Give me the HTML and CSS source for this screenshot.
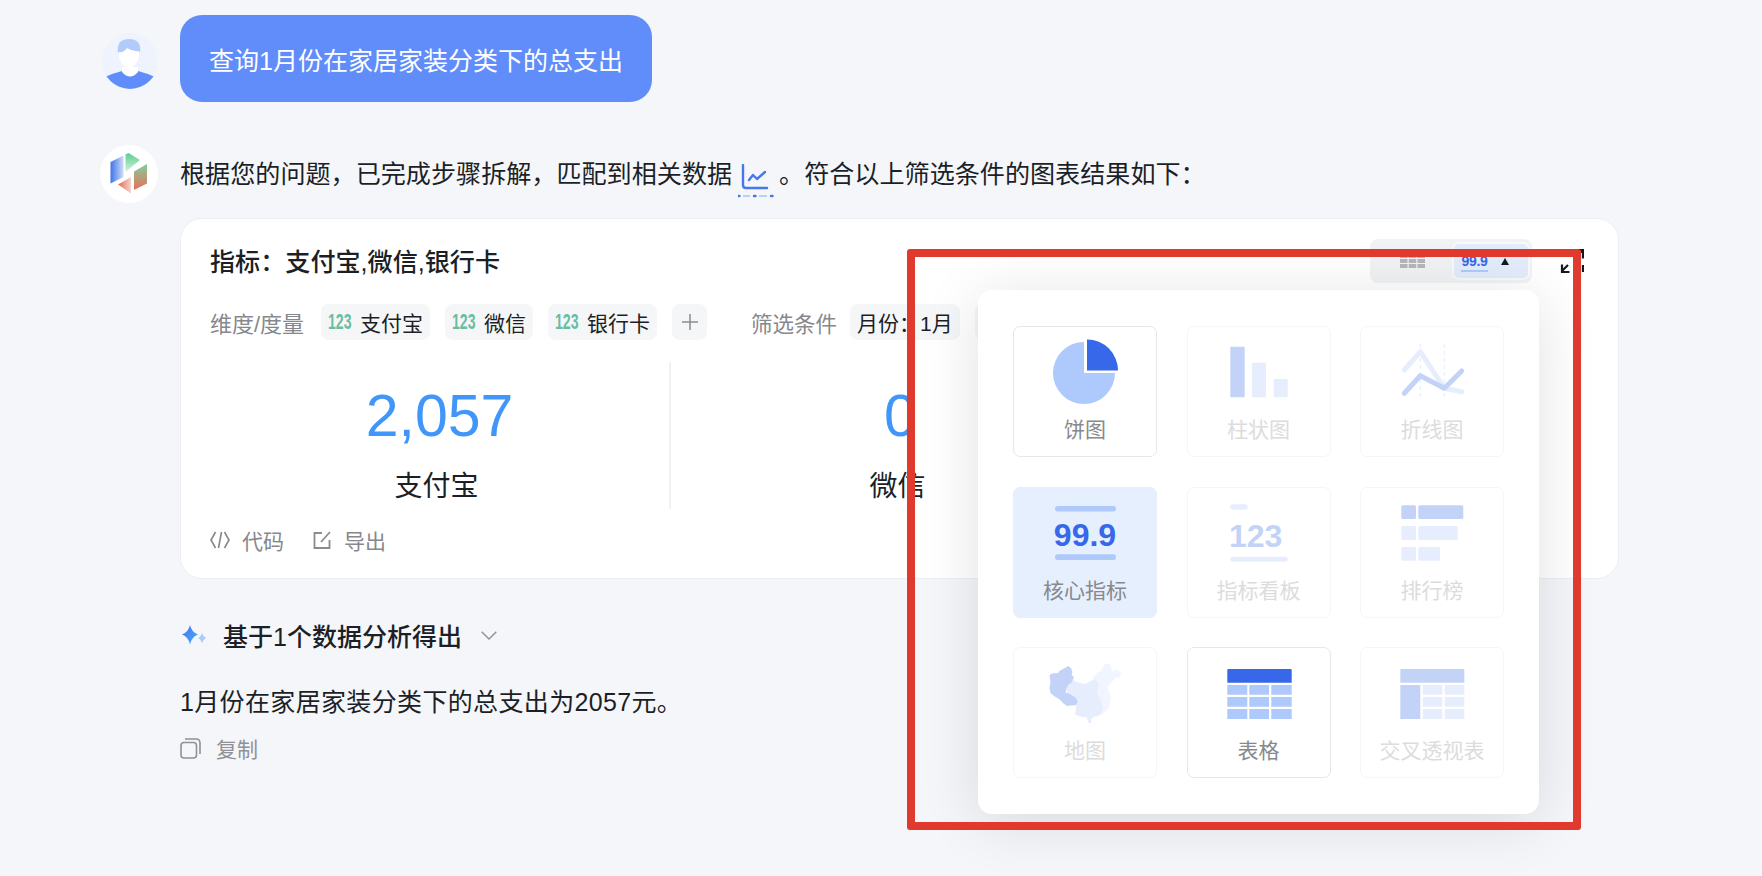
FILE: index.html
```html
<!DOCTYPE html>
<html lang="zh-CN">
<head>
    <meta charset="UTF-8">
    <title>数据问答</title>
    <link rel="stylesheet" href="styles.css">
</head>
<body>
    <div class="chat">
        <!-- 用户提问 -->
        <div class="msg msg-user">
            <svg class="avatar-user" viewBox="0 0 56 56">
                <defs><clipPath id="round"><circle cx="28" cy="28" r="28"/></clipPath></defs>
                <g clip-path="url(#round)">
                    <rect width="56" height="56" fill="#eef3fe"/>
                    <path d="M3 44 Q12 40 20 38 L36 38 Q44 40 53 44 L56 58 L0 58 Z" fill="#618dfa"/>
                    <path d="M20 34 L36 34 L36 39 Q28 48 20 39 Z" fill="#fff"/>
                    <path d="M16 20 Q14 6 27 6 Q40 6 38 20 Z" fill="#b1cbfb"/>
                    <path d="M16.5 19 Q22 20 25 15 Q31 19 37.5 18 Q37.5 32 27 35 Q16.5 32 16.5 19 Z" fill="#fff"/>
                </g>
            </svg>
            <div class="bubble">查询1月份在家居家装分类下的总支出</div>
        </div>

        <!-- 回答 -->
        <div class="msg msg-answer">
            <svg class="avatar-bot" viewBox="0 0 58 58">
                <defs>
                    <linearGradient id="logo-blue" x1="0" y1="0" x2="1" y2="0">
                        <stop offset="0" stop-color="#3f74ea"/><stop offset="1" stop-color="#cfdcf8"/>
                    </linearGradient>
                    <linearGradient id="logo-green" x1="0" y1="0" x2="0" y2="1">
                        <stop offset="0" stop-color="#57cf8e"/><stop offset="1" stop-color="#d6f1e0"/>
                    </linearGradient>
                    <linearGradient id="logo-side" x1="0" y1="0" x2="0" y2="1">
                        <stop offset="0" stop-color="#7fcf9a"/><stop offset="1" stop-color="#e8705a"/>
                    </linearGradient>
                    <linearGradient id="logo-red" x1="1" y1="0" x2="0" y2="0">
                        <stop offset="0" stop-color="#f3d5cc"/><stop offset="1" stop-color="#e8694f"/>
                    </linearGradient>
                </defs>
                <circle cx="29" cy="29" r="29" fill="#fff"/>
                <path d="M10.5 17 L23.5 10.5 L23.5 32 L10.5 38.5 Z" fill="url(#logo-blue)"/>
                <path d="M25.5 9.5 L28.5 8 L40 15 L25.5 27 Z" fill="url(#logo-green)"/>
                <path d="M47 19 L47 38.5 L34 45 L34 26.5 Z" fill="url(#logo-side)"/>
                <path d="M18 39.5 L31 32 L31 48.5 Z" fill="url(#logo-red)"/>
            </svg>
            <div class="answer">
                <p class="intro">
                    根据您的问题，已完成步骤拆解，匹配到相关数据
                    <span class="data-link">
                        <svg viewBox="0 0 36 36" width="36" height="36">
                            <path d="M5 1 V21 Q5 24 8 24 H29" fill="none" stroke="#4677ef" stroke-width="2.4" stroke-linecap="round"/>
                            <path d="M11 16 L15 11 L19 15 L27 8" fill="none" stroke="#4677ef" stroke-width="2.4" stroke-linecap="round" stroke-linejoin="round"/>
                            <path d="M0 32 H1.5 M16 32 H17.5 M33 32 H34.5" stroke="#4677ef" stroke-width="2.4" stroke-linecap="round"/>
                            <path d="M5 32 H12 M21 32 H29" stroke="#a8c1f7" stroke-width="1.4"/>
                        </svg>
                    </span>
                    。符合以上筛选条件的图表结果如下：
                </p>

                <div class="card">
                    <div class="card-head">
                        <h2 class="card-title">指标：支付宝,微信,银行卡</h2>
                        <div class="card-tools">
                            <div class="segment">
                                <div class="segment-item">
                                    <svg viewBox="0 0 25 14" width="25" height="14">
                                        <path d="M0 0H7.5V4H0ZM8.7 0H16.3V4H8.7ZM17.5 0H25V4H17.5ZM0 5H7.5V9H0ZM8.7 5H16.3V9H8.7ZM17.5 5H25V9H17.5ZM0 10H7.5V14H0ZM8.7 10H16.3V14H8.7ZM17.5 10H25V14H17.5Z" fill="#b5b6b8"/>
                                    </svg>
                                </div>
                                <div class="segment-item is-active">
                                    <span class="segment-num">99.9</span>
                                    <svg viewBox="0 0 8 7" width="8" height="7"><path d="M4 0 L8 7 H0 Z" fill="#15181e"/></svg>
                                </div>
                            </div>
                            <svg class="expand" viewBox="0 0 24 24" width="24" height="24">
                                <path d="M8 16 L2 22 M2 15.5 V23 H9.5" fill="none" stroke="#15181e" stroke-width="2.2"/>
                                <path d="M16 8 L22 2 M14.5 1 H23 V9.5" fill="none" stroke="#15181e" stroke-width="2.2"/>
                                <path d="M23 16 V23" stroke="#15181e" stroke-width="2.2"/>
                            </svg>
                        </div>
                    </div>

                    <div class="fields">
                        <span class="field-label">维度/度量</span>
                        <span class="chip"><i class="num-tag">123</i>支付宝</span>
                        <span class="chip"><i class="num-tag">123</i>微信</span>
                        <span class="chip"><i class="num-tag">123</i>银行卡</span>
                        <span class="chip chip-add">
                            <svg viewBox="0 0 18 18" width="18" height="18"><path d="M9 1V17M1 9H17" stroke="#8a8c91" stroke-width="1.5"/></svg>
                        </span>
                        <span class="field-label field-label-filter">筛选条件</span>
                        <span class="chip">月份：1月</span>
                        <span class="chip chip-blank"></span>
                    </div>

                    <div class="metrics">
                        <div class="metric">
                            <div class="metric-value">2,057</div>
                            <div class="metric-name">支付宝</div>
                        </div>
                        <div class="metric">
                            <div class="metric-value">0</div>
                            <div class="metric-name">微信</div>
                        </div>
                    </div>

                    <div class="card-foot">
                        <span class="foot-action">
                            <svg viewBox="0 0 20 20" width="20" height="20"><path d="M5.5 2 L1 10 L5.5 18 M14.5 2 L19 10 L14.5 18 M11.5 2 L8.5 18" fill="none" stroke="#8a8c91" stroke-width="1.7"/></svg>
                            代码
                        </span>
                        <span class="foot-action">
                            <svg viewBox="0 0 20 20" width="20" height="20"><path d="M10 3 H2.5 V18 H17.5 V10 M18 2 L9 12" fill="none" stroke="#8a8c91" stroke-width="1.8"/></svg>
                            导出
                        </span>
                    </div>
                </div>

                <div class="basis">
                    <svg viewBox="0 0 24 20" width="24" height="20">
                        <defs>
                            <linearGradient id="spark" x1="0" y1="0" x2="1" y2="1">
                                <stop offset="0" stop-color="#3f6ff0"/><stop offset="1" stop-color="#4fb0fa"/>
                            </linearGradient>
                        </defs>
                        <path d="M8 0 Q9.5 7 16 9.5 Q9.5 12 8 19.5 Q6.5 12 0 9.5 Q6.5 7 8 0 Z" fill="url(#spark)"/>
                        <path d="M20 8 Q20.8 11 24 13 Q20.8 15 20 18 Q19.2 15 16.5 13 Q19.2 11 20 8 Z" fill="#a9ccfb"/>
                    </svg>
                    <span class="basis-text">基于1个数据分析得出</span>
                    <svg viewBox="0 0 16 9" width="16" height="9"><path d="M0.7 0.7 L8 8 L15.3 0.7" fill="none" stroke="#8f9196" stroke-width="1.4"/></svg>
                </div>

                <p class="result">1月份在家居家装分类下的总支出为2057元。</p>

                <div class="copy">
                    <svg viewBox="0 0 21 21" width="21" height="21">
                        <rect x="1" y="4.5" width="15.5" height="15.5" rx="3" fill="none" stroke="#8f9196" stroke-width="1.6"/>
                        <path d="M5 1 H16 Q20 1 20 5 V16" fill="none" stroke="#8f9196" stroke-width="1.6"/>
                    </svg>
                    复制
                </div>
            </div>
        </div>
    </div>

    <!-- 图表类型面板 -->
    <div class="chart-menu">
        <div class="tile is-on">
            <svg class="tile-icon" viewBox="0 0 72 72">
                <path class="c-mid" d="M35 5 A31 31 0 1 0 66 36 L35 36 Z"/>
                <path class="c-dark" d="M38 2.5 A31 31 0 0 1 69 33.5 L38 33.5 Z"/>
            </svg>
            <span>饼图</span>
        </div>
        <div class="tile">
            <svg class="tile-icon" viewBox="0 0 72 72">
                <rect class="c-soft" x="7.3" y="9.7" width="14.4" height="50.6" rx="1"/>
                <rect class="c-pale" x="29" y="25.7" width="14" height="34.6" rx="1"/>
                <rect class="c-pale" x="50.7" y="42" width="14" height="18.3" rx="1"/>
            </svg>
            <span>柱状图</span>
        </div>
        <div class="tile">
            <svg class="tile-icon" viewBox="0 0 72 72">
                <path d="M24.3 7V62M48.3 7V62" fill="none" stroke="#e6eefe" stroke-width="1.2" stroke-dasharray="4 3"/>
                <path d="M8.3 33 L24.3 14.7 L48.3 51.3 L65.7 54.7" fill="none" stroke="#e6eefe" stroke-width="5" stroke-linecap="round" stroke-linejoin="round"/>
                <path d="M8.3 56.3 L24.3 38.7 L48.3 51.3 L65.7 34" fill="none" stroke="#c3d3f8" stroke-width="5" stroke-linecap="round" stroke-linejoin="round"/>
            </svg>
            <span>折线图</span>
        </div>

        <div class="tile is-current">
            <svg class="tile-icon" viewBox="0 0 72 72">
                <rect class="c-mid" x="6" y="8" width="61" height="5.4" rx="2.7"/>
                <text class="tile-num c-dark" x="36" y="48" text-anchor="middle">99.9</text>
                <rect class="c-mid" x="6" y="56.3" width="61" height="5.7" rx="2.8"/>
            </svg>
            <span>核心指标</span>
        </div>
        <div class="tile">
            <svg class="tile-icon" viewBox="0 0 72 72">
                <rect class="c-pale" x="7.3" y="6.3" width="17.4" height="5.4" rx="2.7"/>
                <text class="tile-num c-soft" x="6" y="49">123</text>
                <rect class="c-pale" x="7.3" y="58.7" width="57.4" height="5" rx="2.5"/>
            </svg>
            <span>指标看板</span>
        </div>
        <div class="tile">
            <svg class="tile-icon" viewBox="0 0 72 72">
                <rect class="c-soft" x="5.3" y="7.3" width="14.7" height="13.7" rx="1.5"/>
                <rect class="c-soft" x="22.3" y="7.3" width="45" height="13.7" rx="1.5"/>
                <rect class="c-pale" x="5.3" y="28" width="14.7" height="14" rx="1.5"/>
                <rect class="c-pale" x="22.3" y="28" width="39.4" height="14" rx="1.5"/>
                <rect class="c-pale" x="5.3" y="49" width="14.7" height="13.7" rx="1.5"/>
                <rect class="c-pale" x="22.3" y="49" width="21.7" height="13.7" rx="1.5"/>
            </svg>
            <span>排行榜</span>
        </div>

        <div class="tile">
            <svg class="tile-icon" viewBox="0 0 72 72">
                <path class="c-faint" d="M48 15 L52 13 L56 6 L60 5.5 L62 8 L62.7 12.7 L68 12 L72 14 L71 19 L66 20 L63 24 L58 29 L62 40 L60 50 L52 57 L48 52 L44 40 L46 28 L44 20 Z"/>
                <path class="c-pale" d="M18 28 L22 21 L28 24 L36 26 L42 23 L47 21 L50 26 L48 34 L52 42 L54 50 L51 57 L45 59 L42.5 60.5 L42 65 L39.5 65 L38 59.5 L33 59 L29 57.5 L26 57 L27 50 L28 42 L24 38 L18 35 Z"/>
                <path class="c-soft" d="M0.5 17 L3 15.5 L9 15 L11 12.5 L16 10 L19 8 L22 10 L23.5 14 L22.5 17 L25 19 L23 24 L19 27 L17.5 31 L16.5 34.5 L22 36.5 L27 40 L28.5 43 L27.5 47 L22 47.5 L18 48 L14 45 L10 41 L5 38 L1.5 35 L0.5 30 L1.5 24 Z"/>
            </svg>
            <span>地图</span>
        </div>
        <div class="tile is-on">
            <svg class="tile-icon" viewBox="0 0 72 72">
                <path class="c-dark" d="M5.3 11 H67.7 Q68.7 11 68.7 12 V24.7 H4.3 V12 Q4.3 11 5.3 11 Z"/>
                <path class="c-mid" d="M4.3 27H24.3V36.7H4.3ZM26.3 27H46V36.7H26.3ZM48.3 27H68.7V36.7H48.3ZM4.3 39H24.3V48.7H4.3ZM26.3 39H46V48.7H26.3ZM48.3 39H68.7V48.7H48.3ZM4.3 51H24.3V61H4.3ZM26.3 51H46V61H26.3ZM48.3 51H68.7V61H48.3Z"/>
            </svg>
            <span>表格</span>
        </div>
        <div class="tile">
            <svg class="tile-icon" viewBox="0 0 72 72">
                <path class="c-soft" d="M5.3 11 H67.3 Q68.3 11 68.3 12 V24.7 H4.3 V12 Q4.3 11 5.3 11 Z"/>
                <rect class="c-soft" x="4.3" y="27" width="20" height="34"/>
                <path class="c-pale" d="M26.7 27H46.3V36.7H26.7ZM48.7 27H68.3V36.7H48.7ZM26.7 39H46.3V48.7H26.7ZM48.7 39H68.3V48.7H48.7ZM26.7 51H46.3V61H26.7ZM48.7 51H68.3V61H48.7Z"/>
            </svg>
            <span>交叉透视表</span>
        </div>
    </div>

    <!-- 标注框 -->
    <div class="mark-box"></div>
</body>
</html>
```

FILE: styles.css
```css
* {
    box-sizing: border-box;
}
html, body {
    height: 100%;
}
body {
    margin: 0;
    overflow: hidden;
    background: #f5f6f9;
    color: #1c1f26;
    font-family: "Liberation Sans", "Noto Sans CJK SC", sans-serif;
    font-size: 25px;
}
p, h2 {
    margin: 0;
    font-weight: 400;
}
.chat {
    padding: 15px 0 0 100px;
    width: 1619px;
}
.msg {
    display: flex;
    gap: 22px;
}
.avatar-user {
    width: 56px;
    height: 56px;
    margin: 18px 0 0 2px;
    flex: none;
}
.avatar-bot {
    width: 58px;
    height: 58px;
    flex: none;
}
.bubble {
    height: 87px;
    padding: 0 29px;
    display: flex;
    align-items: center;
    background: #618dfa;
    color: #fff;
    border-radius: 22px;
}
.msg-answer {
    margin-top: 43px;
}
.answer {
    flex: 1;
    min-width: 0;
}
.intro {
    height: 58px;
    line-height: 58px;
    font-size: 25.1px;
    white-space: nowrap;
    display: flex;
    gap: 5px;
}
.data-link {
    display: inline-flex;
    align-items: center;
    width: 36px;
    height: 58px;
    margin: 8px 0 0 1px;
}

/* card */
.card {
    margin-top: 15px;
    background: #fff;
    border: 1px solid #eceef2;
    border-radius: 22px;
    padding: 20px 34px 23px 29px;
}
.card-head {
    display: flex;
    justify-content: space-between;
    align-items: center;
}
.card-title {
    font-size: 25.1px;
    font-weight: 500;
    padding-bottom: 2px;
}
.card-tools {
    display: flex;
    align-items: center;
    gap: 28px;
}
.segment {
    width: 162px;
    height: 44px;
    padding: 3px 2px;
    display: flex;
    justify-content: flex-end;
    background: #f1f2f4;
    border-radius: 8px;
}
.segment-item {
    width: 80px;
    display: flex;
    align-items: center;
    justify-content: center;
}
.segment-item.is-active {
    width: 78px;
    gap: 13px;
    padding-right: 12px;
    background: #e3ecfb;
    border: 2px solid #f8f9fb;
    border-radius: 7px;
}
.segment-num {
    margin-top: 3px;
    font-size: 14px;
    line-height: 14px;
    font-weight: 700;
    letter-spacing: -0.3px;
    color: #3768ea;
    padding-bottom: 2px;
    border-bottom: 2px solid #aec9fb;
}
.fields {
    margin-top: 21px;
    display: flex;
    align-items: center;
    gap: 15px;
    font-size: 21px;
}
.field-label {
    min-width: 96px;
    color: #86888d;
    font-size: 22px;
}
.field-label-filter {
    min-width: 0;
    margin-left: 29px;
    margin-right: -2px;
    font-size: 21.5px;
}
.chip {
    height: 36px;
    padding: 0 7px;
    display: inline-flex;
    align-items: center;
    flex: none;
    background: #f5f6f8;
    border-radius: 8px;
}
.chip-add {
    width: 35px;
    justify-content: center;
}
.chip-blank {
    width: 60px;
}
.num-tag {
    width: 24px;
    margin-right: 8px;
    font-style: normal;
    font-size: 22px;
    font-weight: 700;
    color: #69bda1;
    transform: scaleX(0.64);
    transform-origin: left center;
}
.metrics {
    margin-top: 22px;
    height: 147px;
    display: flex;
}
.metric {
    width: 461px;
    padding-top: 19px;
    text-align: center;
    border-right: 2px solid #f0f1f4;
}
.metric-value {
    height: 70px;
    line-height: 70px;
    font-size: 59px;
    color: #4096f9;
}
.metric-name {
    margin-top: 16px;
    height: 40px;
    line-height: 40px;
    font-size: 28px;
    margin-right: 6px;
}
.card-foot {
    margin-top: 16px;
    height: 30px;
    display: flex;
    gap: 28px;
    font-size: 21px;
    color: #86888d;
}
.foot-action {
    display: flex;
    align-items: center;
    gap: 12px;
}

/* below the card */
.basis {
    margin: 39px 0 0 2px;
    height: 34px;
    display: flex;
    align-items: center;
    gap: 17px;
}
.basis-text {
    font-size: 25px;
    font-weight: 500;
    margin-right: 2px;
}
.result {
    margin-top: 33px;
    line-height: 34px;
    letter-spacing: 0.35px;
}
.copy {
    margin-top: 14px;
    height: 30px;
    display: flex;
    align-items: center;
    gap: 15px;
    font-size: 21px;
    color: #8f9196;
}

/* chart type panel */
.chart-menu {
    position: absolute;
    left: 978px;
    top: 290px;
    width: 561px;
    height: 524px;
    padding: 36px 35px;
    display: grid;
    grid-template-columns: repeat(3, 144px);
    grid-auto-rows: 131px;
    column-gap: 29.5px;
    row-gap: 29.5px;
    background: #fff;
    border-radius: 14px;
    box-shadow: 0 8px 60px rgba(0, 0, 0, 0.12);
}
.tile {
    padding-top: 10px;
    display: flex;
    flex-direction: column;
    align-items: center;
    border: 1px solid #f6f6f8;
    border-radius: 7px;
    font-size: 21px;
    color: #dcdcdc;
}
.tile.is-on {
    border-color: #e6e7ea;
    color: #87898d;
}
.tile.is-current {
    background: #e6effe;
    border-color: #e6effe;
    color: #87898d;
}
.tile-icon {
    width: 72px;
    height: 72px;
    margin-bottom: 4px;
    overflow: visible;
    flex: none;
}
.tile-num {
    font-size: 32px;
    font-weight: 700;
}
.c-dark { fill: #3768ea; }
.c-mid { fill: #aec9fb; }
.c-soft { fill: #c3d3f8; }
.c-pale { fill: #e6eefe; }
.c-faint { fill: #f1f5ff; }

/* red annotation frame */
.mark-box {
    position: absolute;
    left: 907px;
    top: 249px;
    width: 674px;
    height: 581px;
    border: 8px solid #e0392e;
    border-radius: 3px;
    pointer-events: none;
}
```
